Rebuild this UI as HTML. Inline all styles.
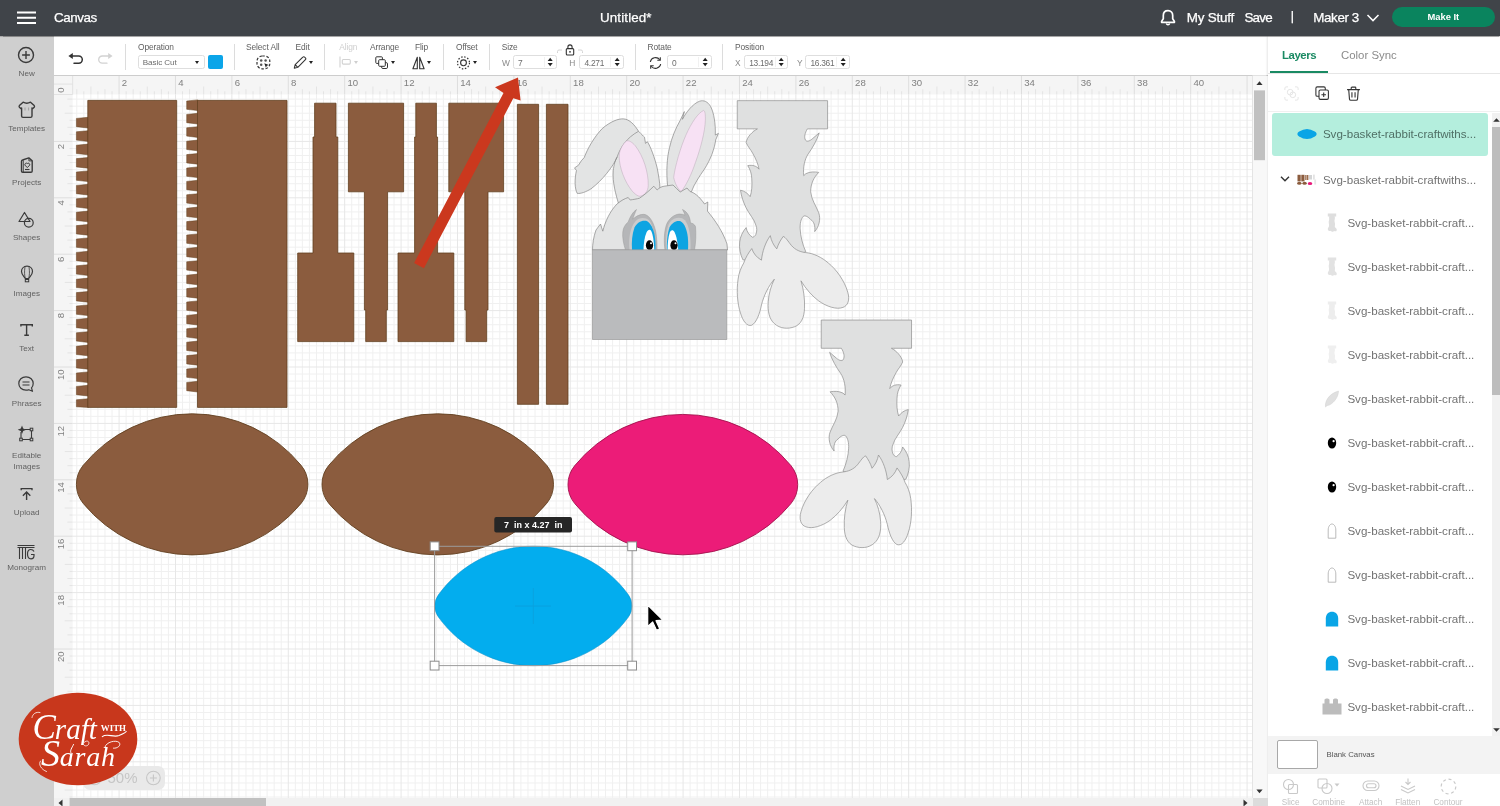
<!DOCTYPE html>
<html lang="en"><head><meta charset="utf-8"><title>Canvas</title>
<style>
html,body{margin:0;padding:0}
body{width:1500px;height:806px;overflow:hidden;position:relative;background:#fff;font-family:"Liberation Sans",sans-serif;color:#444}
#wrap{position:absolute;left:0;top:0;width:1500px;height:806px;overflow:hidden;will-change:transform}
#canvasbg{position:absolute;left:54px;top:75px;width:1214px;height:731px;background:#fff}
#stage{position:absolute;left:0;top:0}
#over{position:absolute;left:0;top:0;z-index:50;pointer-events:none}
.abs{position:absolute;white-space:nowrap}
/* top bar */
#top{position:absolute;left:0;top:0;width:1500px;height:35.5px;background:#404449;z-index:20;box-shadow:0 0.5px 1px rgba(0,0,0,.35)}
#top .t{position:absolute;color:#fff;-webkit-text-stroke:0.25px #fff;font-size:13.4px;line-height:16px;top:9.5px;white-space:nowrap}
#makeit{position:absolute;left:1391.5px;top:6.7px;width:103.7px;height:20.2px;border-radius:10.1px;background:#0a845e;color:#fff;font-weight:bold;font-size:9.4px;line-height:20.2px;text-align:center}
/* sidebar */
#side{position:absolute;left:0;top:35.5px;width:54px;height:771px;background:#cfcfcf;z-index:10}
#side .lb{position:absolute;left:0;width:53.4px;text-align:center;font-size:8.1px;line-height:10px;color:#626262}
#side svg{position:absolute}
/* toolbar */
#tb{position:absolute;left:54px;top:35.5px;width:1214px;height:39.5px;background:#fff;border-bottom:1px solid #cdcdcd;z-index:9}
#tb .l{position:absolute;font-size:8.4px;letter-spacing:-0.1px;line-height:10px;color:#606060;white-space:nowrap}
#tb .l.dis{color:#cfcfcf}
#tb .dv{position:absolute;top:8px;height:26px;width:1px;margin-left:-0.5px;background:#dcdcdc}
#tb .inp{position:absolute;top:19.4px;height:14.2px;border:1px solid #dedede;border-radius:2.5px;background:#fff;box-sizing:border-box}
#tb .inp span{position:absolute;left:4.2px;top:1.7px;font-size:8.4px;letter-spacing:-0.28px;line-height:10px;color:#6c6c6c}
#tb .inp i{position:absolute;right:11.5px;top:1px;bottom:1px;width:1px;background:#f1f1f1}
#tb .sp{position:absolute;font-size:5px;line-height:5px;color:#222}
#tb .ar{position:absolute;width:0;height:0;margin-left:-0.2px;border-left:2.6px solid transparent;border-right:2.6px solid transparent;border-top:3.8px solid #222}
#tb svg{position:absolute}
/* right panel */
#panel{position:absolute;left:1268px;top:35.5px;width:232px;height:771px;background:#fff;z-index:12;box-shadow:-1px 0 2px rgba(0,0,0,.10)}
#panel .tab{position:absolute;top:12.6px;font-size:11.4px;line-height:15px;white-space:nowrap}
#panel .row{position:absolute;left:0;width:224px;height:44px}
#panel .row .tx{position:absolute;font-size:11.6px;line-height:14px;color:#7a7a7a;white-space:nowrap;top:15px}
#panel svg{position:absolute}
#panel .bl{position:absolute;font-size:8.2px;line-height:9px;color:#c2c2c2;text-align:center;width:50px;top:762.5px}

</style></head>
<body><div id="wrap">
<div id="canvasbg"></div>
<svg id="stage" width="1500" height="806" viewBox="0 0 1500 806">
<g id="grid">
<path d="M76.77 94.5V799M83.82 94.5V799M90.87 94.5V799M97.92 94.5V799M104.97 94.5V799M112.02 94.5V799M126.12 94.5V799M133.17 94.5V799M140.22 94.5V799M147.27 94.5V799M154.32 94.5V799M161.37 94.5V799M168.42 94.5V799M182.52 94.5V799M189.57 94.5V799M196.62 94.5V799M203.67 94.5V799M210.72 94.5V799M217.77 94.5V799M224.82 94.5V799M238.92 94.5V799M245.97 94.5V799M253.02 94.5V799M260.07 94.5V799M267.12 94.5V799M274.17 94.5V799M281.22 94.5V799M295.32 94.5V799M302.37 94.5V799M309.42 94.5V799M316.47 94.5V799M323.52 94.5V799M330.57 94.5V799M337.62 94.5V799M351.72 94.5V799M358.77 94.5V799M365.82 94.5V799M372.87 94.5V799M379.92 94.5V799M386.97 94.5V799M394.02 94.5V799M408.12 94.5V799M415.17 94.5V799M422.22 94.5V799M429.27 94.5V799M436.32 94.5V799M443.37 94.5V799M450.42 94.5V799M464.52 94.5V799M471.57 94.5V799M478.62 94.5V799M485.67 94.5V799M492.72 94.5V799M499.77 94.5V799M506.82 94.5V799M520.92 94.5V799M527.97 94.5V799M535.02 94.5V799M542.07 94.5V799M549.12 94.5V799M556.17 94.5V799M563.22 94.5V799M577.32 94.5V799M584.37 94.5V799M591.42 94.5V799M598.47 94.5V799M605.52 94.5V799M612.57 94.5V799M619.62 94.5V799M633.72 94.5V799M640.77 94.5V799M647.82 94.5V799M654.87 94.5V799M661.92 94.5V799M668.97 94.5V799M676.02 94.5V799M690.12 94.5V799M697.17 94.5V799M704.22 94.5V799M711.27 94.5V799M718.32 94.5V799M725.37 94.5V799M732.42 94.5V799M746.52 94.5V799M753.57 94.5V799M760.62 94.5V799M767.67 94.5V799M774.72 94.5V799M781.77 94.5V799M788.82 94.5V799M802.92 94.5V799M809.97 94.5V799M817.02 94.5V799M824.07 94.5V799M831.12 94.5V799M838.17 94.5V799M845.22 94.5V799M859.32 94.5V799M866.37 94.5V799M873.42 94.5V799M880.47 94.5V799M887.52 94.5V799M894.57 94.5V799M901.62 94.5V799M915.72 94.5V799M922.77 94.5V799M929.82 94.5V799M936.87 94.5V799M943.92 94.5V799M950.97 94.5V799M958.02 94.5V799M972.12 94.5V799M979.17 94.5V799M986.22 94.5V799M993.27 94.5V799M1000.32 94.5V799M1007.37 94.5V799M1014.42 94.5V799M1028.52 94.5V799M1035.57 94.5V799M1042.62 94.5V799M1049.67 94.5V799M1056.72 94.5V799M1063.77 94.5V799M1070.82 94.5V799M1084.92 94.5V799M1091.97 94.5V799M1099.02 94.5V799M1106.07 94.5V799M1113.12 94.5V799M1120.17 94.5V799M1127.22 94.5V799M1141.32 94.5V799M1148.37 94.5V799M1155.42 94.5V799M1162.47 94.5V799M1169.52 94.5V799M1176.57 94.5V799M1183.62 94.5V799M1197.72 94.5V799M1204.77 94.5V799M1211.82 94.5V799M1218.87 94.5V799M1225.92 94.5V799M1232.97 94.5V799M1240.02 94.5V799M72.7 99.1H1253M72.7 106.15H1253M72.7 113.2H1253M72.7 120.25H1253M72.7 127.3H1253M72.7 134.35H1253M72.7 148.45H1253M72.7 155.5H1253M72.7 162.55H1253M72.7 169.6H1253M72.7 176.65H1253M72.7 183.7H1253M72.7 190.75H1253M72.7 204.85H1253M72.7 211.9H1253M72.7 218.95H1253M72.7 226H1253M72.7 233.05H1253M72.7 240.1H1253M72.7 247.15H1253M72.7 261.25H1253M72.7 268.3H1253M72.7 275.35H1253M72.7 282.4H1253M72.7 289.45H1253M72.7 296.5H1253M72.7 303.55H1253M72.7 317.65H1253M72.7 324.7H1253M72.7 331.75H1253M72.7 338.8H1253M72.7 345.85H1253M72.7 352.9H1253M72.7 359.95H1253M72.7 374.05H1253M72.7 381.1H1253M72.7 388.15H1253M72.7 395.2H1253M72.7 402.25H1253M72.7 409.3H1253M72.7 416.35H1253M72.7 430.45H1253M72.7 437.5H1253M72.7 444.55H1253M72.7 451.6H1253M72.7 458.65H1253M72.7 465.7H1253M72.7 472.75H1253M72.7 486.85H1253M72.7 493.9H1253M72.7 500.95H1253M72.7 508H1253M72.7 515.05H1253M72.7 522.1H1253M72.7 529.15H1253M72.7 543.25H1253M72.7 550.3H1253M72.7 557.35H1253M72.7 564.4H1253M72.7 571.45H1253M72.7 578.5H1253M72.7 585.55H1253M72.7 599.65H1253M72.7 606.7H1253M72.7 613.75H1253M72.7 620.8H1253M72.7 627.85H1253M72.7 634.9H1253M72.7 641.95H1253M72.7 656.05H1253M72.7 663.1H1253M72.7 670.15H1253M72.7 677.2H1253M72.7 684.25H1253M72.7 691.3H1253M72.7 698.35H1253M72.7 712.45H1253M72.7 719.5H1253M72.7 726.55H1253M72.7 733.6H1253M72.7 740.65H1253M72.7 747.7H1253M72.7 754.75H1253M72.7 768.85H1253M72.7 775.9H1253M72.7 782.95H1253M72.7 790H1253M72.7 797.05H1253" stroke="#f0f0f0" stroke-width="1" fill="none"/>
<path d="M119.07 94.5V799M175.47 94.5V799M231.87 94.5V799M288.27 94.5V799M344.67 94.5V799M401.07 94.5V799M457.47 94.5V799M513.87 94.5V799M570.27 94.5V799M626.67 94.5V799M683.07 94.5V799M739.47 94.5V799M795.87 94.5V799M852.27 94.5V799M908.67 94.5V799M965.07 94.5V799M1021.47 94.5V799M1077.87 94.5V799M1134.27 94.5V799M1190.67 94.5V799M1247.07 94.5V799M72.7 141.4H1253M72.7 197.8H1253M72.7 254.2H1253M72.7 310.6H1253M72.7 367H1253M72.7 423.4H1253M72.7 479.8H1253M72.7 536.2H1253M72.7 592.6H1253M72.7 649H1253M72.7 705.4H1253M72.7 761.8H1253" stroke="#e7e7e7" stroke-width="1" fill="none"/>
</g>
<g id="shapes">
<g fill="#8b5c3e" stroke="#62401f" stroke-width="0.800" stroke-linejoin="round">
<path d="M76.4 118.4L88.1 117.3L88.1 128L76.4 126.7ZM76.4 131.8L88.1 130.7L88.1 141.4L76.4 140.1ZM76.4 145.2L88.1 144.1L88.1 154.8L76.4 153.5ZM76.4 158.6L88.1 157.5L88.1 168.2L76.4 166.9ZM76.4 172L88.1 170.9L88.1 181.6L76.4 180.3ZM76.4 185.4L88.1 184.3L88.1 195L76.4 193.7ZM76.4 198.8L88.1 197.7L88.1 208.4L76.4 207.1ZM76.4 212.2L88.1 211.1L88.1 221.8L76.4 220.5ZM76.4 225.6L88.1 224.5L88.1 235.2L76.4 233.9ZM76.4 239L88.1 237.9L88.1 248.6L76.4 247.3ZM76.4 252.4L88.1 251.3L88.1 262L76.4 260.7ZM76.4 265.8L88.1 264.7L88.1 275.4L76.4 274.1ZM76.4 279.2L88.1 278.1L88.1 288.8L76.4 287.5ZM76.4 292.6L88.1 291.5L88.1 302.2L76.4 300.9ZM76.4 306L88.1 304.9L88.1 315.6L76.4 314.3ZM76.4 319.4L88.1 318.3L88.1 329L76.4 327.7ZM76.4 332.8L88.1 331.7L88.1 342.4L76.4 341.1ZM76.4 346.2L88.1 345.1L88.1 355.8L76.4 354.5ZM76.4 359.6L88.1 358.5L88.1 369.2L76.4 367.9ZM76.4 373L88.1 371.9L88.1 382.6L76.4 381.3ZM76.4 386.4L88.1 385.3L88.1 396L76.4 394.7ZM76.4 399.8L88.1 398.7L88.1 407.4L76.4 406.8Z" stroke-width="0.500"/>
<rect x="87.800" y="100.400" width="88.900" height="307"/>
<path d="M186.7 101L197.8 99.9L197.8 110.6L186.7 109.3ZM186.7 114.4L197.8 113.3L197.8 124L186.7 122.7ZM186.7 127.8L197.8 126.7L197.8 137.4L186.7 136.1ZM186.7 141.2L197.8 140.1L197.8 150.8L186.7 149.5ZM186.7 154.6L197.8 153.5L197.8 164.2L186.7 162.9ZM186.7 168L197.8 166.9L197.8 177.6L186.7 176.3ZM186.7 181.4L197.8 180.3L197.8 191L186.7 189.7ZM186.7 194.8L197.8 193.7L197.8 204.4L186.7 203.1ZM186.7 208.2L197.8 207.1L197.8 217.8L186.7 216.5ZM186.7 221.6L197.8 220.5L197.8 231.2L186.7 229.9ZM186.7 235L197.8 233.9L197.8 244.6L186.7 243.3ZM186.7 248.4L197.8 247.3L197.8 258L186.7 256.7ZM186.7 261.8L197.8 260.7L197.8 271.4L186.7 270.1ZM186.7 275.2L197.8 274.1L197.8 284.8L186.7 283.5ZM186.7 288.6L197.8 287.5L197.8 298.2L186.7 296.9ZM186.7 302L197.8 300.9L197.8 311.6L186.7 310.3ZM186.7 315.4L197.8 314.3L197.8 325L186.7 323.7ZM186.7 328.8L197.8 327.7L197.8 338.4L186.7 337.1ZM186.7 342.2L197.8 341.1L197.8 351.8L186.7 350.5ZM186.7 355.6L197.8 354.5L197.8 365.2L186.7 363.9ZM186.7 369L197.8 367.9L197.8 378.6L186.7 377.3ZM186.7 382.4L197.8 381.3L197.8 392L186.7 390.7Z" stroke-width="0.500"/>
<rect x="197.500" y="100.400" width="89.500" height="307"/>
<path d="M314.600 103.200H336V137H337.800V253H353.800V341.600H297.700V253H313V137H314.600Z"/>
<path d="M348.400 103.200H403.600V191.800H387.600V310H386.300V341.600H365.700V310H364.400V191.800H348.400Z"/>
<path d="M415.800 103.200H436.400V137H437.600V253H453.800V341.600H398V253H414.600V137H415.800Z"/>
<path d="M448.800 103.200H503.600V191.800H488V310H486.700V341.600H466.100V310H464.800V191.800H448.800Z"/>
<rect x="517.400" y="104.300" width="21.200" height="300"/>
<rect x="546.400" y="104.300" width="21.600" height="300"/>
</g>
<path d="M83.21 465.32A140.94 140.94 0 0 1 301.09 465.32A30 30 0 0 1 301.09 503.38A140.94 140.94 0 0 1 83.21 503.38A30 30 0 0 1 83.21 465.32Z" fill="#8b5c3e" stroke="#62401f" stroke-width="0.9"/>
<path d="M328.81 465.32A140.94 140.94 0 0 1 546.69 465.32A30 30 0 0 1 546.69 503.38A140.94 140.94 0 0 1 328.81 503.38A30 30 0 0 1 328.81 465.32Z" fill="#8b5c3e" stroke="#62401f" stroke-width="0.9"/>
<path d="M574.78 465.6A139.65 139.65 0 0 1 790.92 465.6A30 30 0 0 1 790.92 503.6A139.65 139.65 0 0 1 574.78 503.6A30 30 0 0 1 574.78 465.6Z" fill="#ec1c78" stroke="#a3104c" stroke-width="0.9"/>
<path d="M438.39 594.84A117.12 117.12 0 0 1 628.41 594.84A19 19 0 0 1 628.41 617.06A117.12 117.12 0 0 1 438.39 617.06A19 19 0 0 1 438.39 594.84Z" fill="#03adee" stroke="#0a8cc4" stroke-width="0.5"/>
<g id="rabbit" stroke-linejoin="round">
<!-- left ear (coords: zoom C) -->
<g transform="translate(570 95) scale(0.16129)" stroke="#7e7e7e" stroke-width="4">
<path d="M45 610C28 580 28 520 40 468L28 452L52 436L70 408L88 388C110 330 150 260 200 208C250 165 300 146 330 148C370 150 400 185 425 225C445 245 455 255 462 262L468 300L480 290C500 320 525 390 540 450C550 500 556 540 558 575L560 660L300 670C285 620 262 540 268 470C272 430 282 400 292 385C270 440 200 530 130 582C100 600 65 614 45 610Z" fill="#e3e4e4"/>
<path d="M292 385C310 330 350 265 425 225" fill="none"/>
<path d="M350 285C330 300 305 340 305 380C305 450 340 540 385 595C400 612 420 628 432 628C460 625 485 600 485 560C487 480 455 380 405 315C385 292 365 280 350 285Z" fill="#f7e1f4" stroke="#b9a8b8" stroke-width="3"/>
</g>
<!-- right ear (coords: zoom D) -->
<g transform="translate(630 90) scale(0.13648)" stroke="#7e7e7e" stroke-width="4.700">
<path d="M275 700C265 600 270 500 290 420C305 350 335 280 368 222L398 158L384 215C410 165 460 100 510 82C540 72 570 85 590 120C615 165 628 250 625 330L648 318L628 365C620 430 590 510 545 580C510 630 470 690 450 745L440 800L280 800Z" fill="#e3e4e4"/>
<path d="M540 150C500 165 450 240 410 330C370 420 330 560 320 640C330 690 355 730 375 745C410 700 450 620 480 530C520 420 550 300 552 220C553 180 550 155 540 150Z" fill="#f7e1f4" stroke="#b9a8b8" stroke-width="3.500"/>
</g>
<!-- head + eyes (coords: zoom E) -->
<g transform="translate(585 180) scale(0.1)" stroke="#7e7e7e" stroke-width="6.500">
<path d="M75 700C75 640 85 570 110 500L155 440L178 512C200 420 250 310 320 240C360 205 400 185 432 175L452 200C480 195 520 190 545 182C580 160 640 110 688 62L722 100C740 80 760 68 790 62L880 50C900 70 930 100 952 120L1020 80L1050 115C1090 125 1140 160 1195 240L1228 220L1225 312C1300 400 1380 520 1420 640L1425 700Z" fill="#e3e4e4"/>
<path d="M405 700C385 640 372 570 378 520C382 480 400 445 432 420C445 380 475 320 515 295C500 330 485 365 478 392C510 360 560 338 600 345C650 360 690 430 708 520C718 580 722 640 720 700Z" fill="#b5b6b8" stroke="#9a9a9a" stroke-width="5"/>
<path d="M800 700C788 620 790 520 815 445C840 385 890 345 945 340C965 340 985 345 1000 352C992 330 985 310 975 295C1010 310 1040 345 1050 395L1055 430C1075 430 1095 445 1105 465C1112 540 1108 630 1095 700Z" fill="#b5b6b8" stroke="#9a9a9a" stroke-width="5"/>
<path d="M445 700C435 600 445 480 505 412C540 372 600 368 640 402C680 450 700 560 705 700Z" fill="#cbcccd" stroke="none"/>
<path d="M815 700C805 600 810 480 850 420C890 372 960 362 1000 402C1040 452 1060 560 1055 700Z" fill="#cbcccd" stroke="none"/>
<path d="M470 700C465 620 470 540 495 475C520 425 565 400 610 408C655 425 685 490 698 560C705 610 706 660 705 700Z" fill="#0da4e2" stroke="none"/>
<path d="M820 700C815 620 825 530 845 475C870 425 915 400 955 412C995 430 1020 500 1028 570C1033 620 1032 665 1030 700Z" fill="#0da4e2" stroke="none"/>
<path d="M585 700C585 640 595 570 615 525C630 495 650 490 662 510C680 545 690 620 693 700Z" fill="#fff" stroke="none"/>
<path d="M826 700C826 640 832 570 848 525C860 498 880 495 895 520C915 560 928 630 932 700Z" fill="#fff" stroke="none"/>
<ellipse cx="645" cy="652" rx="36" ry="50" fill="#050505" stroke="none"/>
<ellipse cx="890" cy="652" rx="36" ry="50" fill="#050505" stroke="none"/>
<circle cx="660" cy="632" r="10" fill="#fff" stroke="none"/>
<circle cx="905" cy="632" r="10" fill="#fff" stroke="none"/>
</g>
<rect x="592.500" y="249.800" width="134.300" height="89.700" fill="#babbbd" stroke="#9a9a9a" stroke-width="0.700"/>
</g>

<defs>
<g id="foot" stroke="#8c8c8c" stroke-linejoin="round">
<g transform="translate(730 95) scale(0.16129)" stroke-width="4.300">
<path d="M170 210C140 225 105 260 100 295C110 320 130 340 140 360C160 395 175 430 180 460C165 440 140 432 110 438C125 460 135 490 135 520C138 560 135 600 125 630C110 610 90 595 65 590C70 630 85 670 100 700C120 740 150 770 160 806C168 825 168 845 160 865C155 875 148 880 140 882C120 870 105 850 100 822C80 845 62 880 60 912C55 950 65 990 80 1022L300 1040L470 972C450 930 436 870 435 830C433 800 440 765 455 752C465 745 485 755 500 772C520 785 530 810 525 847C550 820 565 770 550 730C535 690 505 650 500 600C500 550 520 510 550 480C525 475 495 475 470 488L457 500C452 450 462 400 485 365C510 330 540 280 553 235L510 272C495 285 478 292 468 280C458 260 465 235 480 210H605V35H45V210Z" fill="#dfe0e0"/>
</g>
<g transform="translate(730 205) scale(0.16129)" stroke-width="4.300">
<path d="M85 360C95 330 115 295 135 270C145 300 165 325 195 342C200 290 220 230 250 190C255 220 270 250 290 272C300 240 315 215 330 195C345 200 360 225 380 250C405 280 440 292 470 295C520 300 570 325 610 360C660 400 710 470 730 540C745 590 730 625 700 635C660 650 600 630 550 595C510 565 470 520 440 470C455 520 465 580 462 640C460 700 440 740 400 755C360 770 310 768 275 735C245 710 232 660 237 600C240 550 255 500 275 460C240 500 210 560 195 620C185 670 165 730 135 745C105 755 80 720 65 670C45 610 40 530 50 460C55 420 70 385 85 360Z" fill="#ececec"/>
</g>
</g>
</defs>
<use href="#foot"/>
<use href="#foot" transform="translate(1648.800 219.400) scale(-1 1)"/>


</g>
<g id="rulers">
<rect x="54" y="75.5" width="1199" height="19" fill="#f5f5f5"/>
<rect x="54" y="75.5" width="18.7" height="724" fill="#f5f5f5"/>
<path d="M76.77 89.2V94.5M83.82 91.3V94.5M90.87 86.5V94.5M97.92 91.3V94.5M104.97 89.2V94.5M112.02 91.3V94.5M126.12 91.3V94.5M133.17 89.2V94.5M140.22 91.3V94.5M147.27 86.5V94.5M154.32 91.3V94.5M161.37 89.2V94.5M168.42 91.3V94.5M182.52 91.3V94.5M189.57 89.2V94.5M196.62 91.3V94.5M203.67 86.5V94.5M210.72 91.3V94.5M217.77 89.2V94.5M224.82 91.3V94.5M238.92 91.3V94.5M245.97 89.2V94.5M253.02 91.3V94.5M260.07 86.5V94.5M267.12 91.3V94.5M274.17 89.2V94.5M281.22 91.3V94.5M295.32 91.3V94.5M302.37 89.2V94.5M309.42 91.3V94.5M316.47 86.5V94.5M323.52 91.3V94.5M330.57 89.2V94.5M337.62 91.3V94.5M351.72 91.3V94.5M358.77 89.2V94.5M365.82 91.3V94.5M372.87 86.5V94.5M379.92 91.3V94.5M386.97 89.2V94.5M394.02 91.3V94.5M408.12 91.3V94.5M415.17 89.2V94.5M422.22 91.3V94.5M429.27 86.5V94.5M436.32 91.3V94.5M443.37 89.2V94.5M450.42 91.3V94.5M464.52 91.3V94.5M471.57 89.2V94.5M478.62 91.3V94.5M485.67 86.5V94.5M492.72 91.3V94.5M499.77 89.2V94.5M506.82 91.3V94.5M520.92 91.3V94.5M527.97 89.2V94.5M535.02 91.3V94.5M542.07 86.5V94.5M549.12 91.3V94.5M556.17 89.2V94.5M563.22 91.3V94.5M577.32 91.3V94.5M584.37 89.2V94.5M591.42 91.3V94.5M598.47 86.5V94.5M605.52 91.3V94.5M612.57 89.2V94.5M619.62 91.3V94.5M633.72 91.3V94.5M640.77 89.2V94.5M647.82 91.3V94.5M654.87 86.5V94.5M661.92 91.3V94.5M668.97 89.2V94.5M676.02 91.3V94.5M690.12 91.3V94.5M697.17 89.2V94.5M704.22 91.3V94.5M711.27 86.5V94.5M718.32 91.3V94.5M725.37 89.2V94.5M732.42 91.3V94.5M746.52 91.3V94.5M753.57 89.2V94.5M760.62 91.3V94.5M767.67 86.5V94.5M774.72 91.3V94.5M781.77 89.2V94.5M788.82 91.3V94.5M802.92 91.3V94.5M809.97 89.2V94.5M817.02 91.3V94.5M824.07 86.5V94.5M831.12 91.3V94.5M838.17 89.2V94.5M845.22 91.3V94.5M859.32 91.3V94.5M866.37 89.2V94.5M873.42 91.3V94.5M880.47 86.5V94.5M887.52 91.3V94.5M894.57 89.2V94.5M901.62 91.3V94.5M915.72 91.3V94.5M922.77 89.2V94.5M929.82 91.3V94.5M936.87 86.5V94.5M943.92 91.3V94.5M950.97 89.2V94.5M958.02 91.3V94.5M972.12 91.3V94.5M979.17 89.2V94.5M986.22 91.3V94.5M993.27 86.5V94.5M1000.32 91.3V94.5M1007.37 89.2V94.5M1014.42 91.3V94.5M1028.52 91.3V94.5M1035.57 89.2V94.5M1042.62 91.3V94.5M1049.67 86.5V94.5M1056.72 91.3V94.5M1063.77 89.2V94.5M1070.82 91.3V94.5M1084.92 91.3V94.5M1091.97 89.2V94.5M1099.02 91.3V94.5M1106.07 86.5V94.5M1113.12 91.3V94.5M1120.17 89.2V94.5M1127.22 91.3V94.5M1141.32 91.3V94.5M1148.37 89.2V94.5M1155.42 91.3V94.5M1162.47 86.5V94.5M1169.52 91.3V94.5M1176.57 89.2V94.5M1183.62 91.3V94.5M1197.72 91.3V94.5M1204.77 89.2V94.5M1211.82 91.3V94.5M1218.87 86.5V94.5M1225.92 91.3V94.5M1232.97 89.2V94.5M1240.02 91.3V94.5M67.4 99.1H72.7M69.5 106.15H72.7M64.7 113.2H72.7M69.5 120.25H72.7M67.4 127.3H72.7M69.5 134.35H72.7M69.5 148.45H72.7M67.4 155.5H72.7M69.5 162.55H72.7M64.7 169.6H72.7M69.5 176.65H72.7M67.4 183.7H72.7M69.5 190.75H72.7M69.5 204.85H72.7M67.4 211.9H72.7M69.5 218.95H72.7M64.7 226H72.7M69.5 233.05H72.7M67.4 240.1H72.7M69.5 247.15H72.7M69.5 261.25H72.7M67.4 268.3H72.7M69.5 275.35H72.7M64.7 282.4H72.7M69.5 289.45H72.7M67.4 296.5H72.7M69.5 303.55H72.7M69.5 317.65H72.7M67.4 324.7H72.7M69.5 331.75H72.7M64.7 338.8H72.7M69.5 345.85H72.7M67.4 352.9H72.7M69.5 359.95H72.7M69.5 374.05H72.7M67.4 381.1H72.7M69.5 388.15H72.7M64.7 395.2H72.7M69.5 402.25H72.7M67.4 409.3H72.7M69.5 416.35H72.7M69.5 430.45H72.7M67.4 437.5H72.7M69.5 444.55H72.7M64.7 451.6H72.7M69.5 458.65H72.7M67.4 465.7H72.7M69.5 472.75H72.7M69.5 486.85H72.7M67.4 493.9H72.7M69.5 500.95H72.7M64.7 508H72.7M69.5 515.05H72.7M67.4 522.1H72.7M69.5 529.15H72.7M69.5 543.25H72.7M67.4 550.3H72.7M69.5 557.35H72.7M64.7 564.4H72.7M69.5 571.45H72.7M67.4 578.5H72.7M69.5 585.55H72.7M69.5 599.65H72.7M67.4 606.7H72.7M69.5 613.75H72.7M64.7 620.8H72.7M69.5 627.85H72.7M67.4 634.9H72.7M69.5 641.95H72.7M69.5 656.05H72.7M67.4 663.1H72.7M69.5 670.15H72.7M64.7 677.2H72.7M69.5 684.25H72.7M67.4 691.3H72.7M69.5 698.35H72.7M69.5 712.45H72.7M67.4 719.5H72.7M69.5 726.55H72.7M64.7 733.6H72.7M69.5 740.65H72.7M67.4 747.7H72.7M69.5 754.75H72.7M69.5 768.85H72.7M67.4 775.9H72.7M69.5 782.95H72.7M64.7 790H72.7M69.5 797.05H72.7" stroke="#e4e4e4" stroke-width="1" fill="none"/>
<path d="M119.07 76V94.5M175.47 76V94.5M231.87 76V94.5M288.27 76V94.5M344.67 76V94.5M401.07 76V94.5M457.47 76V94.5M513.87 76V94.5M570.27 76V94.5M626.67 76V94.5M683.07 76V94.5M739.47 76V94.5M795.87 76V94.5M852.27 76V94.5M908.67 76V94.5M965.07 76V94.5M1021.47 76V94.5M1077.87 76V94.5M1134.27 76V94.5M1190.67 76V94.5M1247.07 76V94.5M54 141.4H72.7M54 197.8H72.7M54 254.2H72.7M54 310.6H72.7M54 367H72.7M54 423.4H72.7M54 479.8H72.7M54 536.2H72.7M54 592.6H72.7M54 649H72.7M54 705.4H72.7M54 761.8H72.7" stroke="#dedede" stroke-width="1" fill="none"/>
<path d="M72.7 75.5V94.5M54 94.5H72.7M54 84.1H72.7" stroke="#e2e2e2" stroke-width="1" fill="none"/>
<g font-family="Liberation Sans, sans-serif" font-size="9.6" fill="#7f7f7f">
<text x="121.87" y="86.4">2</text>
<text x="178.27" y="86.4">4</text>
<text x="234.67" y="86.4">6</text>
<text x="291.07" y="86.4">8</text>
<text x="347.47" y="86.4">10</text>
<text x="403.87" y="86.4">12</text>
<text x="460.27" y="86.4">14</text>
<text x="516.67" y="86.4">16</text>
<text x="573.07" y="86.4">18</text>
<text x="629.47" y="86.4">20</text>
<text x="685.87" y="86.4">22</text>
<text x="742.27" y="86.4">24</text>
<text x="798.67" y="86.4">26</text>
<text x="855.07" y="86.4">28</text>
<text x="911.47" y="86.4">30</text>
<text x="967.87" y="86.4">32</text>
<text x="1024.27" y="86.4">34</text>
<text x="1080.67" y="86.4">36</text>
<text x="1137.07" y="86.4">38</text>
<text x="1193.47" y="86.4">40</text>
<text transform="translate(63.5 87.4) rotate(-90)" text-anchor="end" x="0" y="0">0</text>
<text transform="translate(63.5 143.8) rotate(-90)" text-anchor="end" x="0" y="0">2</text>
<text transform="translate(63.5 200.2) rotate(-90)" text-anchor="end" x="0" y="0">4</text>
<text transform="translate(63.5 256.6) rotate(-90)" text-anchor="end" x="0" y="0">6</text>
<text transform="translate(63.5 313) rotate(-90)" text-anchor="end" x="0" y="0">8</text>
<text transform="translate(63.5 369.4) rotate(-90)" text-anchor="end" x="0" y="0">10</text>
<text transform="translate(63.5 425.8) rotate(-90)" text-anchor="end" x="0" y="0">12</text>
<text transform="translate(63.5 482.2) rotate(-90)" text-anchor="end" x="0" y="0">14</text>
<text transform="translate(63.5 538.6) rotate(-90)" text-anchor="end" x="0" y="0">16</text>
<text transform="translate(63.5 595) rotate(-90)" text-anchor="end" x="0" y="0">18</text>
<text transform="translate(63.5 651.4) rotate(-90)" text-anchor="end" x="0" y="0">20</text>
<text transform="translate(63.5 707.8) rotate(-90)" text-anchor="end" x="0" y="0">22</text>
</g>
</g>
</svg>
<svg id="over" width="1500" height="806" viewBox="0 0 1500 806">
<!-- canvas scrollbars -->
<rect x="1253" y="75.500" width="13.500" height="723" fill="#f8f8f8"/>
<rect x="1254" y="90.400" width="11" height="69.800" fill="#c1c1c1"/>
<path d="M1256.400 85L1259.500 81.300L1262.600 85Z" fill="#333"/>
<path d="M1256.400 789.500L1259.500 793.200L1262.600 789.500Z" fill="#333"/>
<rect x="54" y="798" width="1214" height="8" fill="#f1f1f1"/>
<rect x="69.600" y="798" width="196.400" height="8" fill="#c1c1c1"/>
<path d="M62.500 799.500L58.500 803L62.500 806.500Z" fill="#333"/>
<path d="M1243.500 799.500L1247.500 803L1243.500 806.500Z" fill="#333"/>
<rect x="1253" y="798" width="15" height="8" fill="#dcdcdc"/>
<path d="M1252.500 75.500V798" stroke="#e4e4e4" stroke-width="1"/>
<!-- zoom control -->
<rect x="83" y="766" width="82" height="24" rx="7" fill="#e9e9e9"/>
<circle cx="94.500" cy="778" r="6.800" fill="none" stroke="#c6c6c6" stroke-width="1.100"/>
<path d="M91 778H98" stroke="#c6c6c6" stroke-width="1.100"/>
<circle cx="153.400" cy="778" r="6.800" fill="none" stroke="#c6c6c6" stroke-width="1.100"/>
<path d="M149.900 778H156.900M153.400 774.500V781.500" stroke="#c6c6c6" stroke-width="1.100"/>
<text x="122.500" y="783" text-anchor="middle" font-family="Liberation Sans, sans-serif" font-size="15" fill="#c6c6c6">50%</text>
<!-- selection box -->
<rect x="434.600" y="546.300" width="197.500" height="119.300" fill="none" stroke="#9c9c9c" stroke-width="1"/>
<path d="M515 606H551M533.300 588V624" stroke="#1590c8" stroke-width="1" opacity="0.380"/>
<g fill="#fff" stroke="#8e8e8e" stroke-width="1">
<rect x="430.200" y="541.900" width="8.800" height="8.800"/>
<rect x="627.700" y="541.900" width="8.800" height="8.800"/>
<rect x="430.200" y="661.200" width="8.800" height="8.800"/>
<rect x="627.700" y="661.200" width="8.800" height="8.800"/>
</g>
<!-- size tooltip -->
<rect x="494.300" y="517" width="77.700" height="15.400" rx="2" fill="#262626"/>
<text x="533.200" y="528" text-anchor="middle" font-family="Liberation Sans, sans-serif" font-size="9" font-weight="bold" fill="#fff" id="tip" xml:space="preserve">7  in x 4.27  in</text>
<!-- red arrow -->
<path d="M414.100 263L423.900 268.200L513.300 98.200L520.600 100.400L518 77.600L495 87.300L503.500 92.900Z" fill="#cb381e"/>
<!-- mouse cursor -->
<path d="M647.700 605L647.700 626.500L652.700 622L656.500 630.200L659.700 628.700L656 620.700L662.800 620.200Z" fill="#000" stroke="#fff" stroke-width="1.200" stroke-linejoin="round"/>
<!-- logo -->
<ellipse cx="78" cy="739" rx="59.300" ry="46.300" fill="#c8371c"/>
<g fill="#fff" font-family="Liberation Serif, serif">
<text x="32.500" y="739" font-style="italic" id="lg_craft"><tspan font-size="35">C</tspan><tspan font-size="29" dx="-1">raft</tspan></text>
<text x="100.800" y="730.800" font-size="8.400" font-weight="bold" textLength="25.200" lengthAdjust="spacingAndGlyphs" id="lg_with">WITH</text>
<text x="41" y="766.300" font-style="italic" id="lg_sarah"><tspan font-size="38">S</tspan><tspan font-size="28" dx="-0.300" letter-spacing="0.800">arah</tspan></text>
</g>
<g fill="none" stroke="#fff" stroke-width="1.100" stroke-linecap="round">
<path d="M102.300 736.600C107 732.800 113 737.800 119 735.600C123 734 125.600 732.800 126.200 731.600"/>
<path d="M105 747C106 742 116 739.500 119.300 742.600C121.200 745.600 117.500 748.500 113.500 748.200" stroke-width="0.900"/>
<path d="M84 742.500C87 739.500 90 741.500 88.500 744.500C87 746.500 84 746.300 83.500 744.500" stroke-width="0.800"/>
<path d="M40.500 761C38 764 41 769.500 46.500 771.500" stroke-width="0.800"/>
<path d="M32 717.500C32.500 714 36 711.500 40 712.500" stroke-width="0.800"/>
<path d="M73.500 744.500C72 748 69.500 750.500 71 753" stroke-width="1"/>
</g>
</svg>

<div id="top">
<svg class="abs" style="left:17px;top:10.5px" width="20" height="14" viewBox="0 0 20 14"><path d="M0 1.5H19M0 6.7H19M0 11.9H19" stroke="#fff" stroke-width="2" fill="none"/></svg>
<div class="t" id="t_canvas" style="left:54px;letter-spacing:-0.45px">Canvas</div>
<div class="t" id="t_untitled" style="left:600px;letter-spacing:0.12px">Untitled*</div>
<svg class="abs" style="left:1159px;top:8.5px" width="18" height="18" viewBox="0 0 18 18"><path d="M9 1.6c-3 0-4.7 2.2-4.7 5v3.2L2.6 12.4v.9h12.8v-.9l-1.7-2.6V6.600c0-2.800-1.700-5-4.700-5z" fill="none" stroke="#fff" stroke-width="1.700" stroke-linejoin="round"/><path d="M7.300 14.600a1.800 1.800 0 0 0 3.400 0" fill="none" stroke="#fff" stroke-width="1.400"/></svg>
<div class="t" id="t_mystuff" style="left:1186.8px;letter-spacing:-0.2px">My Stuff</div>
<div class="t" id="t_save" style="left:1244.4px;letter-spacing:-0.7px">Save</div>
<div class="t" style="left:1290.8px;top:8.2px;font-size:12.5px">|</div>
<div class="t" id="t_maker" style="left:1313.3px;letter-spacing:-0.4px">Maker 3</div>
<svg class="abs" style="left:1366px;top:13px" width="14" height="10" viewBox="0 0 14 10"><path d="M1.500 2L7 7.600L12.500 2" fill="none" stroke="#fff" stroke-width="1.500"/></svg>
<div id="makeit">Make It</div>
</div>

<div id="side">
<!-- New -->
<svg style="left:17.400px;top:10.100px" width="18" height="18" viewBox="0 0 18 18"><circle cx="9" cy="9" r="7.500" fill="none" stroke="#3a3a3a" stroke-width="1.400"/><path d="M9 5.100V12.900M5.100 9H12.900" stroke="#3a3a3a" stroke-width="1.400"/></svg>
<div class="lb" style="top:33.500px">New</div>
<!-- Templates -->
<svg style="left:16px;top:64px" width="22" height="20" viewBox="0 0 22 20"><path d="M7.100 2.200Q10.800 4.200 14.500 2.200L18.200 5.600Q18.800 6.500 18.200 7.200L16.800 8.600L16 8V16Q16 17.400 14.600 17.400H7Q5.600 17.400 5.600 16V8L4.800 8.600L3.400 7.200Q2.800 6.500 3.400 5.600Z" fill="none" stroke="#3a3a3a" stroke-width="1.400" stroke-linejoin="round"/><path d="M9 7.500V10.500M12.600 7.500V10.500" stroke="#3a3a3a" stroke-width="0.500" opacity="0.600"/></svg>
<div class="lb" style="top:88px">Templates</div>
<!-- Projects -->
<svg style="left:16px;top:119px" width="22" height="20" viewBox="0 0 22 20"><path d="M5.500 16.100V6.500Q5.500 5.300 6.600 5L12.800 2.900L16.200 5.800V16Q16.200 17.300 15 17.300H6.700Q5.500 17.300 5.500 16.100Z" fill="none" stroke="#3a3a3a" stroke-width="1.400" stroke-linejoin="round"/><path d="M7.300 5.300V17M12.900 3.200V5.900H16" fill="none" stroke="#3a3a3a" stroke-width="0.900"/><path d="M11.300 12.600L8.900 10.100A1.500 1.500 0 0 1 11.300 8.500A1.500 1.500 0 0 1 13.700 10.100Z" fill="none" stroke="#3a3a3a" stroke-width="1"/><path d="M9 14.500H13.500" stroke="#3a3a3a" stroke-width="1.100"/></svg>
<div class="lb" style="top:142.800px">Projects</div>
<!-- Shapes -->
<svg style="left:16px;top:174px" width="20" height="20" viewBox="0 0 20 20"><path d="M8.500 2.500L14 11.500H3Z" fill="none" stroke="#3a3a3a" stroke-width="1.200" stroke-linejoin="round"/><circle cx="12.800" cy="12.800" r="4.400" fill="none" stroke="#3a3a3a" stroke-width="1.200"/></svg>
<div class="lb" style="top:197.800px">Shapes</div>
<!-- Images -->
<svg style="left:16.500px;top:228.800px" width="20" height="20" viewBox="0 0 20 20"><path d="M10 2.200C6.500 2.200 4.500 4.800 4.500 7.500C4.500 10.500 7 12.300 8.300 14.500H11.700C13 12.300 15.500 10.500 15.500 7.500C15.500 4.800 13.500 2.200 10 2.200Z" fill="none" stroke="#3a3a3a" stroke-width="1.200"/><path d="M8.300 14.500C7.500 11 7.200 8 8 2.800M11.700 14.500C12.500 11 12.800 8 12 2.800" fill="none" stroke="#3a3a3a" stroke-width="0.800"/><rect x="8.300" y="15.500" width="3.400" height="2.300" fill="none" stroke="#3a3a3a" stroke-width="1"/></svg>
<div class="lb" style="top:253px">Images</div>
<!-- Text -->
<svg style="left:16px;top:284px" width="22" height="20" viewBox="0 0 22 20"><path d="M4.900 6.600V4.700H16.300V6.600M10.600 4.700V15.200M8.300 15.300H12.900" fill="none" stroke="#3a3a3a" stroke-width="1.400"/></svg>
<div class="lb" style="top:308px">Text</div>
<!-- Phrases -->
<svg style="left:16px;top:338px" width="20" height="20" viewBox="0 0 20 20"><path d="M10 2.800C5.800 2.800 2.800 5.800 2.800 9.500C2.800 13.200 5.800 16.200 10 16.200C11 16.200 12 16 12.800 15.700L16.500 17.300L15.500 13.800C16.600 12.600 17.200 11.100 17.200 9.500C17.200 5.800 14.200 2.800 10 2.800Z" fill="none" stroke="#3a3a3a" stroke-width="1.200" stroke-linejoin="round"/><path d="M6.500 8H13.500M6.500 11H13.500" stroke="#3a3a3a" stroke-width="1.100"/></svg>
<div class="lb" style="top:363.200px">Phrases</div>
<!-- Editable Images -->
<svg style="left:16px;top:388.500px" width="20" height="20" viewBox="0 0 20 20"><path d="M5 15.500V8M5 15.500H15.500M15.500 15.500V6M9 5.500H15.500" fill="none" stroke="#3a3a3a" stroke-width="1.100"/><rect x="3.700" y="14.200" width="2.600" height="2.600" fill="#cfcfcf" stroke="#3a3a3a" stroke-width="1"/><rect x="14.200" y="14.200" width="2.600" height="2.600" fill="#cfcfcf" stroke="#3a3a3a" stroke-width="1"/><rect x="14.200" y="4.200" width="2.600" height="2.600" fill="#cfcfcf" stroke="#3a3a3a" stroke-width="1"/><path d="M6 1.500L7.200 4.600L10.300 5.800L7.200 7L6 10.100L4.800 7L1.700 5.800L4.800 4.600Z" fill="#3a3a3a"/></svg>
<div class="lb" style="top:415px">Editable</div>
<div class="lb" style="top:426.500px">Images</div>
<!-- Upload -->
<svg style="left:16px;top:448px" width="22" height="20" viewBox="0 0 22 20"><path d="M5.200 6.300V4.700H16V6.300" fill="none" stroke="#3a3a3a" stroke-width="1.300"/><path d="M10.600 16V8.300M6.900 11.700L10.600 8L14.300 11.700" fill="none" stroke="#3a3a3a" stroke-width="1.400"/></svg>
<div class="lb" style="top:472.500px">Upload</div>
<!-- Monogram -->
<svg style="left:15px;top:506px" width="22" height="20" viewBox="0 0 22 20"><path d="M2.500 3.500H19.500M2.500 5.500H19.500M4.500 5.500V17M7.500 5.500V17M10.500 5.500V17" fill="none" stroke="#3a3a3a" stroke-width="1.100"/><path d="M19 9.500C18.300 8 17 7.500 15.800 7.500C13.500 7.500 12.500 9.500 12.500 12C12.500 14.800 13.800 16.800 16 16.800C17.800 16.800 19 15.500 19 13.500V12.500H16" fill="none" stroke="#3a3a3a" stroke-width="1.200"/></svg>
<div class="lb" style="top:527.500px">Monogram</div>
</div>

<div id="tb">
<svg style="left:13.5px;top:16.2px" width="16" height="13" viewBox="0 0 16 13"><path d="M3.500 4H10.700A3.600 3.600 0 0 1 10.700 11.200H6" fill="none" stroke="#333" stroke-width="1.500" stroke-linecap="round"/><path d="M0.400 4L4.800 0.900V7.100Z" fill="#333"/></svg>
<svg style="left:43px;top:16.2px" width="16" height="13" viewBox="0 0 16 13"><path d="M12.500 4H5.300A3.600 3.600 0 0 0 5.300 11.200H10" fill="none" stroke="#d2d2d2" stroke-width="1.300" stroke-linecap="round"/><path d="M15.600 4L11.200 0.900V7.100Z" fill="#d2d2d2"/></svg>
<div class="dv" style="left:71.6px"></div>
<div class="l" id="l_op" style="left:84px;top:6.8px">Operation</div>
<div class="inp" style="left:84px;width:66.7px;top:19.8px;height:13.400px"><span id="l_basic" style="left:3.800px;top:1.500px;font-size:8.100px;letter-spacing:-0.100px">Basic Cut</span></div>
<div class="ar" style="left:140.9px;top:25.7px"></div>
<div style="position:absolute;left:154.4px;top:19.5px;width:14.300px;height:13.700px;border-radius:2px;background:#0ba5e9"></div>
<div class="dv" style="left:180px"></div>
<div class="l" id="l_selall" style="left:192px;top:6.8px">Select All</div>
<svg style="left:202px;top:19.7px" width="15" height="15" viewBox="0 0 15 15"><rect x="1" y="1" width="12.800" height="12.800" rx="5.200" fill="none" stroke="#333" stroke-width="1.200" stroke-dasharray="2.600 1.700"/><circle cx="5.200" cy="5.400" r="1.250" fill="#555"/><circle cx="9.600" cy="5.400" r="1.250" fill="#555"/><circle cx="5.200" cy="9.800" r="1.250" fill="#555"/><path d="M8.300 8.300L12.800 10L10.700 10.800L10 12.900Z" fill="#222"/></svg>
<div class="l" id="l_edit" style="left:241.6px;top:6.8px">Edit</div>
<svg style="left:238.5px;top:19.0px" width="15" height="15" viewBox="0 0 15 15"><path d="M1.300 13.200L2.200 9.700L9.800 2.100A1.300 1.300 0 0 1 11.700 2.100L12.400 2.800A1.300 1.300 0 0 1 12.400 4.700L4.800 12.300ZM2.200 9.700L4.800 12.300" fill="none" stroke="#333" stroke-width="1.100" stroke-linejoin="round"/></svg>
<div class="ar" style="left:254.9px;top:25.4px"></div>
<div class="dv" style="left:270.7px"></div>
<div class="l dis" id="l_align" style="left:285.3px;top:6.8px">Align</div>
<svg style="left:284.6px;top:20.1px" width="14" height="12" viewBox="0 0 14 12"><path d="M1 0.500V11.500" stroke="#d2d2d2" stroke-width="1.100"/><rect x="3.300" y="3.500" width="8" height="4.600" rx="1" fill="none" stroke="#d2d2d2" stroke-width="1.100"/></svg>
<div class="ar" style="left:300.0px;top:25.4px;border-top-color:#cfcfcf"></div>
<div class="l" id="l_arr" style="left:316px;top:6.8px">Arrange</div>
<svg style="left:320.800px;top:20.700px" width="14" height="14" viewBox="0 0 14 14"><rect x="0.800" y="0.800" width="6.600" height="6.600" rx="0.900" fill="#fff" stroke="#333" stroke-width="1"/><rect x="3.700" y="3.700" width="6.600" height="6.600" rx="0.900" fill="#fff" stroke="#333" stroke-width="1"/><path d="M10.300 6.600H11.200A1.300 1.300 0 0 1 12.500 7.900V11.200A1.300 1.300 0 0 1 11.200 12.500H7.900A1.300 1.300 0 0 1 6.600 11.200V10.300" fill="none" stroke="#333" stroke-width="1"/></svg>
<div class="ar" style="left:336.9px;top:25.4px"></div>
<div class="l" id="l_flip" style="left:361px;top:6.8px">Flip</div>
<svg style="left:358px;top:20.4px" width="13" height="14" viewBox="0 0 13 14"><path d="M5.300 1.200V12.800H0.900ZM7.700 1.200V12.800H12.100Z" fill="none" stroke="#333" stroke-width="1.100" stroke-linejoin="round"/></svg>
<div class="ar" style="left:373.6px;top:25.4px"></div>
<div class="dv" style="left:389.6px"></div>
<div class="l" id="l_off" style="left:402px;top:6.8px">Offset</div>
<svg style="left:402px;top:19.2px" width="15" height="15" viewBox="0 0 15 15"><circle cx="7.500" cy="7.800" r="6" fill="none" stroke="#333" stroke-width="1.200" stroke-dasharray="1.500 1.640"/><circle cx="7.500" cy="7.800" r="2.900" fill="none" stroke="#333" stroke-width="1.100"/></svg>
<div class="ar" style="left:419.2px;top:25.4px"></div>
<div class="dv" style="left:435.7px"></div>
<div class="l" id="l_size" style="left:447.7px;top:6.8px">Size</div>
<div class="l" id="l_w" style="color:#8a8a8a;left:448px;top:22.3px">W</div>
<div class="inp" style="left:458.7px;width:44.6px"><span>7</span><i></i><svg style="right:2.700px;top:1.500px" width="6.400" height="9.800" viewBox="0 0 6 9" preserveAspectRatio="none"><path d="M0.600 3.600L3 0.600L5.400 3.600ZM0.600 5.400L3 8.400L5.400 5.400Z" fill="#222"/></svg></div>
<svg style="left:503.2px;top:8.7px" width="26" height="12" viewBox="0 0 26 12"><path d="M0.500 9V7.500A1.500 1.500 0 0 1 2 6H5M25.500 9V7.500A1.500 1.500 0 0 0 24 6H21" fill="none" stroke="#cfcfcf" stroke-width="0.900"/><rect x="9.300" y="4.600" width="7.400" height="6.400" rx="1" fill="#fff" stroke="#333" stroke-width="1.100"/><path d="M10.900 4.600V3A2.100 2.100 0 0 1 15.100 3V4.600" fill="none" stroke="#333" stroke-width="1.100"/><circle cx="13" cy="7.800" r="0.900" fill="#333"/></svg>
<div class="l" id="l_h" style="color:#8a8a8a;left:515.3px;top:22.3px">H</div>
<div class="inp" style="left:525.3px;width:44.3px"><span id="v_h">4.271</span><i></i><svg style="right:2.700px;top:1.500px" width="6.400" height="9.800" viewBox="0 0 6 9" preserveAspectRatio="none"><path d="M0.600 3.600L3 0.600L5.400 3.600ZM0.600 5.400L3 8.400L5.400 5.400Z" fill="#222"/></svg></div>
<div class="dv" style="left:581.3px"></div>
<div class="l" id="l_rot" style="left:593.6px;top:6.8px">Rotate</div>
<svg style="left:593.5px;top:20.3px" width="15" height="14" viewBox="0 0 15 14"><path d="M2.300 6A5.300 5.300 0 0 1 11.800 3.800M12.700 8A5.300 5.300 0 0 1 3.200 10.200" fill="none" stroke="#333" stroke-width="1.100"/><path d="M12.300 1.200V4.200H9.300M2.700 12.800V9.800H5.700" fill="none" stroke="#333" stroke-width="1.100"/></svg>
<div class="inp" style="left:612.8px;width:44.8px"><span>0</span><i></i><svg style="right:2.700px;top:1.500px" width="6.400" height="9.800" viewBox="0 0 6 9" preserveAspectRatio="none"><path d="M0.600 3.600L3 0.600L5.400 3.600ZM0.600 5.400L3 8.400L5.400 5.400Z" fill="#222"/></svg></div>
<div class="dv" style="left:668.5px"></div>
<div class="l" id="l_pos" style="left:681px;top:6.8px">Position</div>
<div class="l" id="l_x" style="color:#8a8a8a;left:681px;top:22.3px">X</div>
<div class="inp" style="left:690px;width:44.4px"><span id="v_x">13.194</span><i></i><svg style="right:2.700px;top:1.500px" width="6.400" height="9.800" viewBox="0 0 6 9" preserveAspectRatio="none"><path d="M0.600 3.600L3 0.600L5.400 3.600ZM0.600 5.400L3 8.400L5.400 5.400Z" fill="#222"/></svg></div>
<div class="l" id="l_y" style="color:#8a8a8a;left:743px;top:22.3px">Y</div>
<div class="inp" style="left:751.2px;width:44.5px"><span id="v_y">16.361</span><i></i><svg style="right:2.700px;top:1.500px" width="6.400" height="9.800" viewBox="0 0 6 9" preserveAspectRatio="none"><path d="M0.600 3.600L3 0.600L5.400 3.600ZM0.600 5.400L3 8.400L5.400 5.400Z" fill="#222"/></svg></div>
</div>

<div id="panel">
<div style="position:absolute;left:0;top:75.800px;width:232px;height:1px;background:#f0f0f0"></div>
<div class="tab" id="tab_layers" style="left:14px;color:#1a8a63;font-weight:bold;letter-spacing:-0.45px">Layers</div>
<div class="tab" id="tab_cs" style="left:73px;color:#8b8b8b">Color Sync</div>
<div style="position:absolute;left:0;top:37.1px;width:232px;height:1px;background:#e6e6e6"></div>
<div style="position:absolute;left:1.600px;top:35.3px;width:58.800px;height:2.600px;background:#1a8a63"></div>
<svg style="left:15.700px;top:50.200px" width="15" height="15" viewBox="0 0 17 17"><path d="M1 4.500V2.500A1.500 1.500 0 0 1 2.500 1H4.500M12.500 1H14.500A1.500 1.500 0 0 1 16 2.500V4.500M16 12.500V14.500A1.500 1.500 0 0 1 14.500 16H12.500M4.500 16H2.500A1.500 1.500 0 0 1 1 14.500V12.500" fill="none" stroke="#e4e4e4" stroke-width="1.100"/><circle cx="7" cy="7" r="3.200" fill="none" stroke="#e4e4e4" stroke-width="1.100"/><circle cx="10" cy="10" r="3.200" fill="none" stroke="#e4e4e4" stroke-width="1.100"/></svg>
<svg style="left:47.200px;top:50.600px" width="15.200" height="15.200" viewBox="0 0 17 17"><rect x="1" y="1" width="10.500" height="10.500" rx="1.500" fill="#fff" stroke="#333" stroke-width="1.200"/><rect x="4.500" y="4.500" width="10.500" height="10.500" rx="1.500" fill="#fff" stroke="#333" stroke-width="1.200"/><path d="M9.750 7.200V12.300M7.200 9.750H12.300" stroke="#333" stroke-width="1.200"/></svg>
<svg style="left:78.400px;top:50.200px" width="15" height="15.600" viewBox="0 0 16 17"><path d="M1 4H15M5.500 3.800V2A0.800 0.800 0 0 1 6.300 1.200H9.700A0.800 0.800 0 0 1 10.500 2V3.800" fill="none" stroke="#333" stroke-width="1.200"/><path d="M2.800 4L3.600 14.300A1.500 1.500 0 0 0 5.100 15.600H10.900A1.500 1.500 0 0 0 12.400 14.300L13.200 4" fill="none" stroke="#333" stroke-width="1.200"/><path d="M6.300 6.800V12.600M9.700 6.800V12.600" stroke="#333" stroke-width="1.200"/></svg>
<div style="position:absolute;left:4.4px;top:77.3px;width:215.500px;height:43.400px;border-radius:3px;background:#b4eedd"></div>
<svg style="left:29px;top:92.3px" width="20" height="12" viewBox="0 0 20 12"><path d="M0.400 6C0.400 4.800 1.200 4.200 2.200 3.500A14 14 0 0 1 17.800 3.500C18.800 4.200 19.600 4.800 19.600 6C19.600 7.200 18.800 7.800 17.800 8.500A14 14 0 0 1 2.200 8.500C1.200 7.800 0.400 7.200 0.400 6Z" fill="#0aa5e6"/></svg>
<div class="abs ltx" id="row1" style="left:54.9px;top:91.7px;font-size:11.600px;line-height:14px;color:#4f6f65">Svg-basket-rabbit-craftwiths...</div>
<svg style="left:12.3px;top:139.9px" width="10" height="8" viewBox="0 0 10 8"><path d="M1 1.800L5 5.800L9 1.800" fill="none" stroke="#333" stroke-width="1.400"/></svg>
<svg style="left:28.6px;top:138.1px" width="20" height="12" viewBox="0 0 20 12"><rect x="0.500" y="0.800" width="3.200" height="6.600" fill="#8b5c3e"/><rect x="4.300" y="0.800" width="3.200" height="6.600" fill="#8b5c3e"/><rect x="8.200" y="1" width="1.400" height="5" fill="#9a6a4b"/><rect x="10" y="1" width="1.400" height="5" fill="#9a6a4b"/><ellipse cx="2.300" cy="9.300" rx="2.200" ry="1.500" fill="#8b5c3e"/><ellipse cx="7.600" cy="9.300" rx="2.200" ry="1.500" fill="#8b5c3e"/><ellipse cx="13" cy="9.600" rx="2.300" ry="1.500" fill="#e8197a"/><rect x="12" y="1" width="3" height="4.500" fill="#d4d5d6"/><rect x="16" y="0.600" width="1.800" height="5" fill="#e3e3e3"/><rect x="17.300" y="5.500" width="1.800" height="5" fill="#e6e6e6"/></svg>
<div class="abs ltx" id="row2" style="left:54.9px;top:137.1px;font-size:11.600px;line-height:14px;color:#727272">Svg-basket-rabbit-craftwiths...</div>
<svg style="left:58.4px;top:177.6px" width="12" height="19" viewBox="0 0 10 16" preserveAspectRatio="none"><path d="M1.500 0.500H8.500V3H7.200C8 5 6.500 6 7.300 8C8 10 7 11 7.500 12C9 13 9.500 14.500 8.500 15.300C7.500 15.800 7 15 6.500 15.300C5.500 16 4.500 15.800 4 15C3 15.500 1.500 15 1.500 13.500C1.500 12.500 2.500 12 2.500 11C2.800 9 1.800 8 2.500 6C3 5 2.200 4 2.800 3H1.500Z" fill="#dedede"/></svg>
<div class="abs ltx" id="row3" style="left:79.4px;top:180.5px;font-size:11.600px;line-height:14px;color:#727272">Svg-basket-rabbit-craft...</div>
<svg style="left:58.4px;top:221.6px" width="12" height="19" viewBox="0 0 10 16" preserveAspectRatio="none"><path d="M1.500 0.500H8.500V3H7.200C8 5 6.500 6 7.300 8C8 10 7 11 7.500 12C9 13 9.500 14.500 8.500 15.300C7.500 15.800 7 15 6.500 15.300C5.500 16 4.500 15.800 4 15C3 15.500 1.500 15 1.500 13.500C1.500 12.500 2.500 12 2.500 11C2.800 9 1.800 8 2.500 6C3 5 2.200 4 2.800 3H1.500Z" fill="#e2e2e2"/></svg>
<div class="abs ltx"  style="left:79.4px;top:224.5px;font-size:11.600px;line-height:14px;color:#727272">Svg-basket-rabbit-craft...</div>
<svg style="left:58.4px;top:265.6px" width="12" height="19" viewBox="0 0 10 16" preserveAspectRatio="none"><path d="M1.500 0.500H8.500V3H7.200C8 5 6.500 6 7.300 8C8 10 7 11 7.500 12C9 13 9.500 14.500 8.500 15.300C7.500 15.800 7 15 6.500 15.300C5.500 16 4.500 15.800 4 15C3 15.500 1.500 15 1.500 13.500C1.500 12.500 2.500 12 2.500 11C2.800 9 1.800 8 2.500 6C3 5 2.200 4 2.800 3H1.500Z" fill="#ededed"/></svg>
<div class="abs ltx"  style="left:79.4px;top:268.5px;font-size:11.600px;line-height:14px;color:#727272">Svg-basket-rabbit-craft...</div>
<svg style="left:58.4px;top:309.6px" width="12" height="19" viewBox="0 0 10 16" preserveAspectRatio="none"><path d="M1.500 0.500H8.500V3H7.200C8 5 6.500 6 7.300 8C8 10 7 11 7.500 12C9 13 9.500 14.500 8.500 15.300C7.500 15.800 7 15 6.500 15.300C5.500 16 4.500 15.800 4 15C3 15.500 1.500 15 1.500 13.500C1.500 12.500 2.500 12 2.500 11C2.800 9 1.800 8 2.500 6C3 5 2.200 4 2.800 3H1.500Z" fill="#efefef"/></svg>
<div class="abs ltx"  style="left:79.4px;top:312.5px;font-size:11.600px;line-height:14px;color:#727272">Svg-basket-rabbit-craft...</div>
<svg style="left:56.4px;top:354.1px" width="16" height="18" viewBox="0 0 16 18"><path d="M1.500 17C0.800 12 4 4 14.500 1C14.500 8 8 15 3.500 15.500C2.500 16 2 16.500 1.500 17Z" fill="#e0e0e0" stroke="#d0d0d0" stroke-width="0.500"/></svg>
<div class="abs ltx"  style="left:79.4px;top:356.5px;font-size:11.600px;line-height:14px;color:#727272">Svg-basket-rabbit-craft...</div>
<svg style="left:59.4px;top:401.1px" width="10" height="12" viewBox="0 0 10 12"><ellipse cx="5" cy="6" rx="4.200" ry="5.500" fill="#000"/><circle cx="6.600" cy="4.200" r="1.100" fill="#fff"/></svg>
<div class="abs ltx"  style="left:79.4px;top:400.5px;font-size:11.600px;line-height:14px;color:#727272">Svg-basket-rabbit-craft...</div>
<svg style="left:59.4px;top:445.1px" width="10" height="12" viewBox="0 0 10 12"><ellipse cx="5" cy="6" rx="4.200" ry="5.500" fill="#000"/><circle cx="6.600" cy="4.200" r="1.100" fill="#fff"/></svg>
<div class="abs ltx"  style="left:79.4px;top:444.5px;font-size:11.600px;line-height:14px;color:#727272">Svg-basket-rabbit-craft...</div>
<svg style="left:59.4px;top:487.1px" width="10" height="16" viewBox="0 0 10 16"><path d="M1.200 15.200V7C1.200 3.500 3 1 5 1C7 1 8.800 3.500 8.800 7V15.200Z" fill="#fff" stroke="#aaa" stroke-width="0.800"/></svg>
<div class="abs ltx"  style="left:79.4px;top:488.5px;font-size:11.600px;line-height:14px;color:#727272">Svg-basket-rabbit-craft...</div>
<svg style="left:59.4px;top:531.1px" width="10" height="16" viewBox="0 0 10 16"><path d="M1.200 15.200V7C1.200 3.500 3 1 5 1C7 1 8.800 3.500 8.800 7V15.200Z" fill="#fff" stroke="#aaa" stroke-width="0.800"/></svg>
<div class="abs ltx"  style="left:79.4px;top:532.5px;font-size:11.600px;line-height:14px;color:#727272">Svg-basket-rabbit-craft...</div>
<svg style="left:57.4px;top:575.1px" width="14" height="16" viewBox="0 0 14 16"><path d="M0.800 15.500V7.500C0.800 3.500 3.500 0.800 7 0.800C10.500 0.800 13.200 3.500 13.200 7.500V15.500Z" fill="#0aa5e6"/></svg>
<div class="abs ltx"  style="left:79.4px;top:576.5px;font-size:11.600px;line-height:14px;color:#727272">Svg-basket-rabbit-craft...</div>
<svg style="left:57.4px;top:619.1px" width="14" height="16" viewBox="0 0 14 16"><path d="M0.800 15.500V7.500C0.800 3.500 3.500 0.800 7 0.800C10.500 0.800 13.200 3.500 13.200 7.500V15.500Z" fill="#0aa5e6"/></svg>
<div class="abs ltx"  style="left:79.4px;top:620.5px;font-size:11.600px;line-height:14px;color:#727272">Svg-basket-rabbit-craft...</div>
<svg style="left:54.4px;top:661.1px" width="20" height="18" viewBox="0 0 20 18"><path d="M0.500 17.500V6.500H2.500V2.500C3.500 1 6.500 1 7.500 2.500V6.500H11V2.500C12 1 15 1 16 2.500V6.500H19.500V17.500Z" fill="#bcbcbc"/></svg>
<div class="abs ltx"  style="left:79.4px;top:664.5px;font-size:11.600px;line-height:14px;color:#727272">Svg-basket-rabbit-craft...</div>
<div style="position:absolute;left:223.5px;top:77.3px;width:9px;height:623px;background:#f1f1f1"></div>
<div style="position:absolute;left:223.5px;top:91.3px;width:9px;height:268px;background:#bdbdbd"></div>
<svg style="left:223.5px;top:81.1px" width="9" height="6" viewBox="0 0 9 6"><path d="M1.200 4.800L4.500 1.200L7.800 4.800Z" fill="#333"/></svg>
<svg style="left:223.5px;top:691.0px" width="9" height="6" viewBox="0 0 9 6"><path d="M1.200 1.200L4.500 4.800L7.800 1.200Z" fill="#333"/></svg>
<div style="position:absolute;left:0;top:700.0px;width:232px;height:38.200px;background:#f3f3f3"></div>
<div style="position:absolute;left:8.5px;top:704.8px;width:41.800px;height:28.400px;box-sizing:border-box;border:1px solid #a8a8a8;border-radius:2px;background:#fff"></div>
<div class="abs" id="blank" style="left:58.5px;top:714.5px;font-size:7.800px;line-height:10px;color:#555">Blank Canvas</div>
<svg style="left:14.4px;top:742.0px" width="17" height="17" viewBox="0 0 17 17"><circle cx="6.500" cy="6.500" r="5" fill="none" stroke="#c9c9c9" stroke-width="1.100"/><rect x="6.500" y="6.500" width="9" height="9" rx="1" fill="none" stroke="#c9c9c9" stroke-width="1.100"/></svg>
<svg style="left:49.4px;top:742.0px" width="24" height="17" viewBox="0 0 24 17"><rect x="1" y="1" width="9" height="9" rx="1" fill="none" stroke="#c9c9c9" stroke-width="1.100"/><circle cx="10" cy="10.500" r="5" fill="none" stroke="#c9c9c9" stroke-width="1.100"/><path d="M17.500 5.500L20 8.500L22.500 5.500Z" fill="#c9c9c9"/></svg>
<svg style="left:94px;top:744.5px" width="18" height="12" viewBox="0 0 18 12"><rect x="1" y="1" width="16" height="9.500" rx="4.750" fill="none" stroke="#c9c9c9" stroke-width="1.100"/><rect x="4.500" y="3.800" width="9.500" height="4" rx="2" fill="none" stroke="#c9c9c9" stroke-width="1.100"/></svg>
<svg style="left:132px;top:742.0px" width="16" height="17" viewBox="0 0 16 17"><path d="M8 0.500V6M5.500 4L8 6.500L10.500 4" fill="none" stroke="#c9c9c9" stroke-width="1.100"/><path d="M1 8L8 11.500L15 8M1 11.500L8 15L15 11.500" fill="none" stroke="#c9c9c9" stroke-width="1.100"/></svg>
<svg style="left:171.5px;top:742.0px" width="17" height="17" viewBox="0 0 17 17"><circle cx="8.500" cy="8.500" r="7.300" fill="none" stroke="#c9c9c9" stroke-width="1.200" stroke-dasharray="3 2.700"/></svg>
<div class="bl" style="left:-2.4px">Slice</div>
<div class="bl" style="left:35.7px">Combine</div>
<div class="bl" style="left:77.6px">Attach</div>
<div class="bl" style="left:114.7px">Flatten</div>
<div class="bl" style="left:155px">Contour</div>
</div>

</div></body></html>
